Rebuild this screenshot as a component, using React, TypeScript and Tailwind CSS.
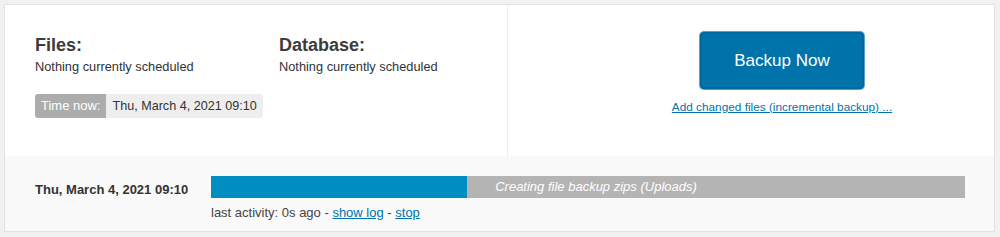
import React from "react";

const font = { fontFamily: '"Liberation Sans", Arial, sans-serif' };

const App: React.FC = () => {
  const progress = 34;
  return (
    <div className="min-h-[237px] w-[1000px] bg-[#f1f1f1] p-1 text-[#444]" style={font}>
      <div className="flex h-[228px] w-[991px] flex-col border border-[#e2e2e2] bg-white">
        <div className="flex h-[151px]">
          <div className="w-[503px] border-r border-[#eeeeee] pl-[30px] pt-[29px]">
            <div className="flex">
              <div className="w-[244px]">
                <h3 className="text-[18px] font-bold leading-[22px] text-[#3c3c3c]">Files:</h3>
                <p className="mt-[2px] text-[12.8px] leading-[18px] text-[#333]">Nothing currently scheduled</p>
              </div>
              <div>
                <h3 className="text-[18px] font-bold leading-[22px] text-[#3c3c3c]">Database:</h3>
                <p className="mt-[2px] text-[12.8px] leading-[18px] text-[#333]">Nothing currently scheduled</p>
              </div>
            </div>
            <div className="mt-[18px] inline-flex h-[24px] items-stretch overflow-hidden rounded-[3px] text-[13px]">
              <span className="flex items-center bg-[#acacac] px-[6px] text-white">Time now:</span>
              <span className="flex items-center bg-[#eeeeee] px-[6px] text-[12.6px] text-[#333]">Thu, March 4, 2021 09:10</span>
            </div>
          </div>
          <div className="flex flex-1 flex-col items-center pl-[62px] pt-[27px]">
            <button className="h-[57px] w-[164px] rounded-[4px] border-2 border-[#006a9e] bg-[#0073aa] text-[17px] text-white shadow-[0_0_0_1px_#5aa0c8]">
              Backup Now
            </button>
            <a href="#" className="mt-[11px] text-[11.8px] leading-[14px] text-[#0073aa] underline">
              Add changed files (incremental backup) ...
            </a>
          </div>
        </div>
        <div className="flex flex-1 bg-[#f9f9f9] pl-[30px] pt-[20px]">
          <div className="w-[176px] pt-[4px] text-[13px] font-bold text-[#333]">Thu, March 4, 2021 09:10</div>
          <div className="w-[754px]">
            <div className="relative h-[22px] w-full bg-[#b4b4b4]">
              <div className="h-full bg-[#008ec2]" style={{ width: `${progress}%` }} />
              <span className="absolute inset-0 flex items-center justify-center pl-[16px] text-[13px] italic text-white">
                Creating file backup zips (Uploads)
              </span>
            </div>
            <div className="mt-[5px] text-[13px] text-[#444]">
              last activity: 0s ago - <a href="#" className="text-[#0073aa] underline">show log</a> -{" "}
              <a href="#" className="text-[#0073aa] underline">stop</a>
            </div>
          </div>
        </div>
      </div>
    </div>
  );
};

export default App;
